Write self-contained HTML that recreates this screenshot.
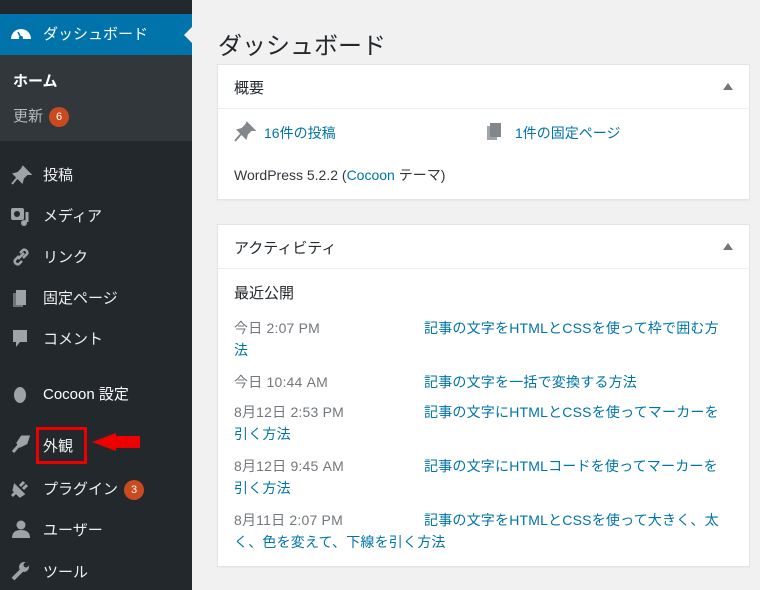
<!DOCTYPE html>
<html><head><meta charset="utf-8"><style>
*{margin:0;padding:0;box-sizing:border-box}
body{width:760px;height:590px;overflow:hidden;background:#f1f1f1;font-family:"Liberation Sans","Noto Sans CJK JP",sans-serif;font-size:14px;color:#23282d;position:relative}
.side{position:absolute;left:0;top:0;width:192px;height:590px;background:#23282d}
.abs{position:absolute}
.mi{position:absolute;left:43px;color:#eee;font-size:15px;line-height:20px}
.ic{position:absolute;left:10px;width:22px;height:20px}
.badge{display:inline-block;width:20px;height:20px;border-radius:10px;background:#ca4a1f;color:#fff;font-size:11px;text-align:center;line-height:20px;vertical-align:middle;margin-left:6px}
.box{position:absolute;left:217px;width:533px;background:#fff;border:1px solid #e2e4e7;box-shadow:0 1px 1px rgba(0,0,0,.04)}
.bh{height:44px;border-bottom:1px solid #eee;padding:12px 16px;font-size:15px;color:#23282d}
.tri{position:absolute;right:16px;top:18px;width:0;height:0;border-left:5px solid transparent;border-right:5px solid transparent;border-bottom:7px solid #72777c}
a{color:#0073aa;text-decoration:none}
.row{position:absolute;left:16px;width:520px;line-height:22px;font-size:14px;color:#0073aa;white-space:nowrap;letter-spacing:0.2px}
.row .d{display:inline-block;width:190px;color:#72777c}
</style></head><body>
<div class="side">
 <div class="abs" style="left:0;top:14px;width:192px;height:41px;background:#0073aa"></div>
 <div class="abs" style="left:184px;top:27px;width:0;height:0;border-top:8px solid transparent;border-bottom:8px solid transparent;border-right:8px solid #f1f1f1"></div>
 <svg class="ic" style="top:24px" viewBox="0 0 22 20"><path d="M1 15 A10 10 0 0 1 21 15 Z" fill="#fff"/><circle cx="11" cy="14" r="2" fill="#0073aa"/><path d="M11 14 L8 8" stroke="#0073aa" stroke-width="1.5"/></svg>
 <div class="mi" style="top:25px;color:#fff">ダッシュボード</div>
 <div class="abs" style="left:0;top:55px;width:192px;height:86px;background:#32373c"></div>
 <div class="abs" style="left:13px;top:70px;color:#fff;font-weight:bold;font-size:15px">ホーム</div>
 <div class="abs" style="left:13px;top:105px;color:#b4b9be;font-size:15px">更新<span class="badge">6</span></div>
 <svg class="ic" style="top:165px" viewBox="0 0 22 20"><path d="M13 2 L20 9 L17 9 L13 13 L12 17 L4 9 L8 8 L12 4 Z M7 13 L2 19" stroke="#9ea3a8" fill="#9ea3a8" stroke-width="2"/></svg>
 <div class="mi" style="top:166px">投稿</div>
 <svg class="ic" style="top:206px" viewBox="0 0 22 20"><rect x="1" y="2" width="13" height="12" rx="2" fill="#9ea3a8"/><circle cx="7" cy="8" r="3" fill="#23282d"/><path d="M17 6 V16" stroke="#9ea3a8" stroke-width="3"/><circle cx="14" cy="17" r="3" fill="#9ea3a8"/></svg>
 <div class="mi" style="top:207px">メディア</div>
 <svg class="ic" style="top:247px" viewBox="0 0 22 20"><path d="M8 12 L14 6 M9 9 L5 13 A3 3 0 0 0 9 17 L12 14 M13 11 L17 7 A3 3 0 0 0 13 3 L10 6" stroke="#9ea3a8" stroke-width="2.5" fill="none"/></svg>
 <div class="mi" style="top:248px">リンク</div>
 <svg class="ic" style="top:288px" viewBox="0 0 22 20"><rect x="3" y="5" width="10" height="14" fill="#6e7378"/><rect x="6" y="2" width="10" height="15" fill="#9ea3a8"/></svg>
 <div class="mi" style="top:289px">固定ページ</div>
 <svg class="ic" style="top:329px" viewBox="0 0 22 20"><path d="M3 1 H17 V13 H10 L6 18 V13 H3 Z" fill="#9ea3a8"/></svg>
 <div class="mi" style="top:330px">コメント</div>
 <svg class="ic" style="top:385px" viewBox="0 0 22 20"><ellipse cx="10" cy="10" rx="6" ry="8" fill="#9ea3a8"/></svg>
 <div class="mi" style="top:385px;color:#fff">Cocoon 設定</div>
 <svg class="ic" style="top:434px" viewBox="0 0 22 20"><path d="M3 18 L10 10 M12 3 L18 3 L16 9 L10 12 L8 9 Z" stroke="#9ea3a8" fill="#9ea3a8" stroke-width="3"/></svg>
 <div class="abs" style="left:36px;top:427px;width:51px;height:37px;border:3px solid #e00"></div>
 <div class="mi" style="top:437px">外観</div>
 <div class="abs" style="left:116px;top:436px;width:24px;height:12px;background:#e00"></div>
 <div class="abs" style="left:92px;top:433px;width:0;height:0;border-top:9px solid transparent;border-bottom:9px solid transparent;border-right:24px solid #e00"></div>
 <svg class="ic" style="top:478px" viewBox="0 0 22 20"><path d="M2 18 L6 14 M5 8 L13 16 L10 18 L4 12 Z M10 8 L14 4 M13 11 L17 7" stroke="#9ea3a8" stroke-width="3" fill="#9ea3a8"/></svg>
 <div class="mi" style="top:480px">プラグイン<span class="badge">3</span></div>
 <svg class="ic" style="top:519px" viewBox="0 0 22 20"><circle cx="11" cy="6" r="4.5" fill="#9ea3a8"/><path d="M2 19 Q2 11 11 11 Q20 11 20 19 Z" fill="#9ea3a8"/></svg>
 <div class="mi" style="top:521px">ユーザー</div>
 <svg class="ic" style="top:561px" viewBox="0 0 22 20"><path d="M3 18 L12 9" stroke="#9ea3a8" stroke-width="4"/><circle cx="14" cy="6" r="5" fill="#9ea3a8"/><circle cx="16" cy="4" r="2.5" fill="#23282d"/></svg>
 <div class="mi" style="top:563px">ツール</div>
</div>
<div class="abs" style="left:218px;top:26px;font-size:24px;color:#23282d">ダッシュボード</div>
<div class="box" style="top:64px;height:136px">
 <div class="bh">概要</div><div class="tri"></div>
 <svg class="abs" style="left:16px;top:56px" width="22" height="22" viewBox="0 0 22 22"><path d="M13 2 L20 9 L17 9 L13 13 L12 17 L4 9 L8 8 L12 4 Z M7 13 L1 20" stroke="#82878c" fill="#82878c" stroke-width="2"/></svg>
 <a class="abs" style="left:46px;top:58px">16件の投稿</a>
 <svg class="abs" style="left:268px;top:57px" width="18" height="20" viewBox="0 0 18 20"><rect x="1" y="4" width="10" height="14" fill="#a0a5aa"/><rect x="4" y="1" width="11" height="14" fill="#82878c"/></svg>
 <a class="abs" style="left:297px;top:58px">1件の固定ページ</a>
 <div class="abs" style="left:16px;top:100px;color:#32373c">WordPress 5.2.2 (<a>Cocoon</a> テーマ)</div>
</div>
<div class="box" style="top:224px;height:343px">
 <div class="bh">アクティビティ</div><div class="tri"></div>
 <div class="abs" style="left:16px;top:57px;font-size:15px">最近公開</div>
 <div class="row" style="top:92px"><span class="d">今日 2:07 PM</span>記事の文字をHTMLとCSSを使って枠で囲む方<br>法</div>
 <div class="row" style="top:146px"><span class="d">今日 10:44 AM</span>記事の文字を一括で変換する方法</div>
 <div class="row" style="top:176px"><span class="d">8月12日 2:53 PM</span>記事の文字にHTMLとCSSを使ってマーカーを<br>引く方法</div>
 <div class="row" style="top:230px"><span class="d">8月12日 9:45 AM</span>記事の文字にHTMLコードを使ってマーカーを<br>引く方法</div>
 <div class="row" style="top:284px"><span class="d">8月11日 2:07 PM</span>記事の文字をHTMLとCSSを使って大きく、太<br>く、色を変えて、下線を引く方法</div>
</div>
</body></html>
